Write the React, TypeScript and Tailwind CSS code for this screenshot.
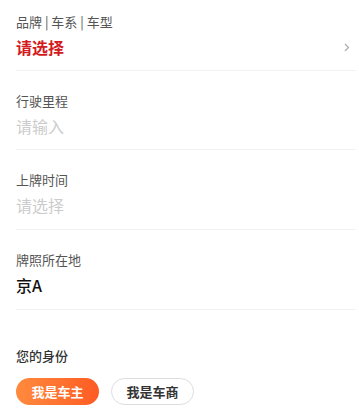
import React from "react";

const font = { fontFamily: '"Noto Sans CJK SC", "Noto Sans", sans-serif' };

function Row({ label, value, valueClass, pad, chevron }: { label: string; value: string; valueClass: string; pad: string; chevron?: boolean }) {
  return (
    <div className={`${pad} border-b border-[#f2f2f2] flex items-end`}>
      <div className="flex-1">
        <div className="text-[13px] leading-[18px] text-[#555]">{label}</div>
        <div className={`mt-[4px] text-[16px] leading-[24px] ${valueClass}`}>{value}</div>
      </div>
      {chevron && (
        <svg width="6" height="9" viewBox="0 0 6 9" className="mb-[7px] mr-[6px]">
          <path d="M1 1 L4.5 4.5 L1 8" fill="none" stroke="#aaa" strokeWidth="1.2" />
        </svg>
      )}
    </div>
  );
}

export default function App() {
  return (
    <div className="w-[359px] h-[420px] bg-white pl-4 pr-[3px] overflow-hidden" style={font}>
      <Row pad="pt-[13px] pb-[11px]" label="品牌 | 车系 | 车型" value="请选择" valueClass="text-[#d41920] font-bold" chevron />
      <Row pad="pt-[21px] pb-[11px]" label="行驶里程" value="请输入" valueClass="text-[#cccccc]" />
      <Row pad="pt-[21px] pb-[12px]" label="上牌时间" value="请选择" valueClass="text-[#cccccc]" />
      <Row pad="pt-[21px] pb-[12px]" label="牌照所在地" value="京A" valueClass="text-[#111] font-medium" />
      <div className="mt-[37px] text-[13px] leading-[18px] text-[#333] font-medium">您的身份</div>
      <div className="mt-[13px] flex gap-3">
        <div className="w-[83px] h-[27px] rounded-full bg-gradient-to-r from-[#ff8a3d] to-[#ff5a23] text-white text-[13px] font-bold flex items-center justify-center">我是车主</div>
        <div className="w-[83px] h-[27px] rounded-full border border-[#dddddd] text-[#333] text-[13px] font-bold flex items-center justify-center">我是车商</div>
      </div>
    </div>
  );
}
